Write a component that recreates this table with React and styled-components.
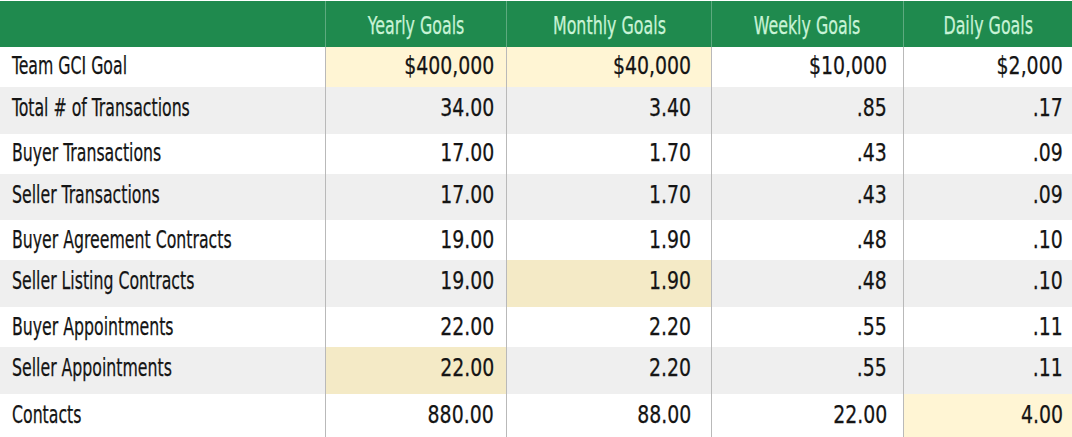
import styled, { createGlobalStyle } from "styled-components";

const GlobalStyle = createGlobalStyle`
	html, body {
		margin: 0;
		padding: 0;
		background: #ffffff;
	}
	body {
		font-family: "DejaVu Sans Condensed", "Liberation Sans", sans-serif;
		color: #141414;
	}
`;

const columns = [
	{ title: "Yearly Goals", pad: 12 },
	{ title: "Monthly Goals", pad: 20 },
	{ title: "Weekly Goals", pad: 16 },
	{ title: "Daily Goals", pad: 9 },
];

// hl: index of highlighted value column
const rows = [
	{ label: "Team GCI Goal", values: ["$400,000", "$40,000", "$10,000", "$2,000"], hl: [0, 1] },
	{ label: "Total # of Transactions", values: ["34.00", "3.40", ".85", ".17"], hl: [] },
	{ label: "Buyer Transactions", values: ["17.00", "1.70", ".43", ".09"], hl: [] },
	{ label: "Seller Transactions", values: ["17.00", "1.70", ".43", ".09"], hl: [] },
	{ label: "Buyer Agreement Contracts", values: ["19.00", "1.90", ".48", ".10"], hl: [] },
	{ label: "Seller Listing Contracts", values: ["19.00", "1.90", ".48", ".10"], hl: [1] },
	{ label: "Buyer Appointments", values: ["22.00", "2.20", ".55", ".11"], hl: [] },
	{ label: "Seller Appointments", values: ["22.00", "2.20", ".55", ".11"], hl: [0] },
	{ label: "Contacts", values: ["880.00", "88.00", "22.00", "4.00"], hl: [3] },
];

const Sheet = styled.div`
	width: 1072px;
	height: 437px;
	overflow: hidden;
	display: flex;
	flex-direction: column;
`;

const Row = styled.div`
	display: grid;
	grid-template-columns: 325px 181px 205px 192px 1fr;
	height: ${(props) => props.$height}px;
	background: ${(props) => (props.$striped ? "#efefef" : "#ffffff")};
`;

const HeaderRow = styled(Row)`
	background: #1f8a4e;
	border-top: 1px solid #ffffff;
	box-sizing: border-box;
`;

// condensed look: the installed fonts are wider than the sheet's font
const Squeeze = styled.span`
	display: inline-block;
	white-space: nowrap;
	-webkit-text-stroke: 0.25px currentColor;
	transform: scaleX(${(props) => props.$scale});
	transform-origin: ${(props) => props.$origin};
`;

const HeaderCell = styled.div`
	display: flex;
	align-items: center;
	justify-content: center;
	padding-top: 3px;
	font-size: 24.5px;
	color: #c8f3d6;
	border-left: ${(props) => (props.$first ? "none" : "1px solid rgba(255, 255, 255, 0.28)")};
`;

const LabelCell = styled.div`
	display: flex;
	align-items: center;
	padding-left: 12px;
	padding-bottom: ${(props) => (props.$striped ? 6 : 2)}px;
	font-size: 25px;
	border-left: 3px solid #ffffff;
	margin-left: -3px;
`;

const ValueCell = styled.div`
	display: flex;
	align-items: center;
	justify-content: flex-end;
	padding-right: ${(props) => props.$pad}px;
	padding-bottom: ${(props) => (props.$striped ? 6 : 2)}px;
	font-size: 25px;
	border-left: 1px solid #b9b9b9;
	background: ${(props) =>
		props.$highlight ? (props.$striped ? "#f4eac6" : "#fff5d4") : "transparent"};
`;

const App = () => {
	return (
		<>
			<GlobalStyle />
			<Sheet>
				<HeaderRow $height={47}>
					<HeaderCell $first />
					{columns.map((col) => (
						<HeaderCell key={col.title}>
							<Squeeze $scale={0.72} $origin="center">
								{col.title}
							</Squeeze>
						</HeaderCell>
					))}
				</HeaderRow>

				{rows.map((row, i) => {
					const striped = i % 2 === 1;
					const height = striped ? 47 : i === rows.length - 1 ? 43 : 40;
					return (
						<Row key={row.label} $striped={striped} $height={height}>
							<LabelCell $striped={striped}>
								<Squeeze $scale={0.7} $origin="left">
									{row.label}
								</Squeeze>
							</LabelCell>
							{row.values.map((value, j) => (
								<ValueCell
									key={columns[j].title}
									$pad={columns[j].pad}
									$striped={striped}
									$highlight={row.hl.includes(j)}>
									<Squeeze $scale={0.84} $origin="right">
										{value}
									</Squeeze>
								</ValueCell>
							))}
						</Row>
					);
				})}
			</Sheet>
		</>
	);
};

export default App;
